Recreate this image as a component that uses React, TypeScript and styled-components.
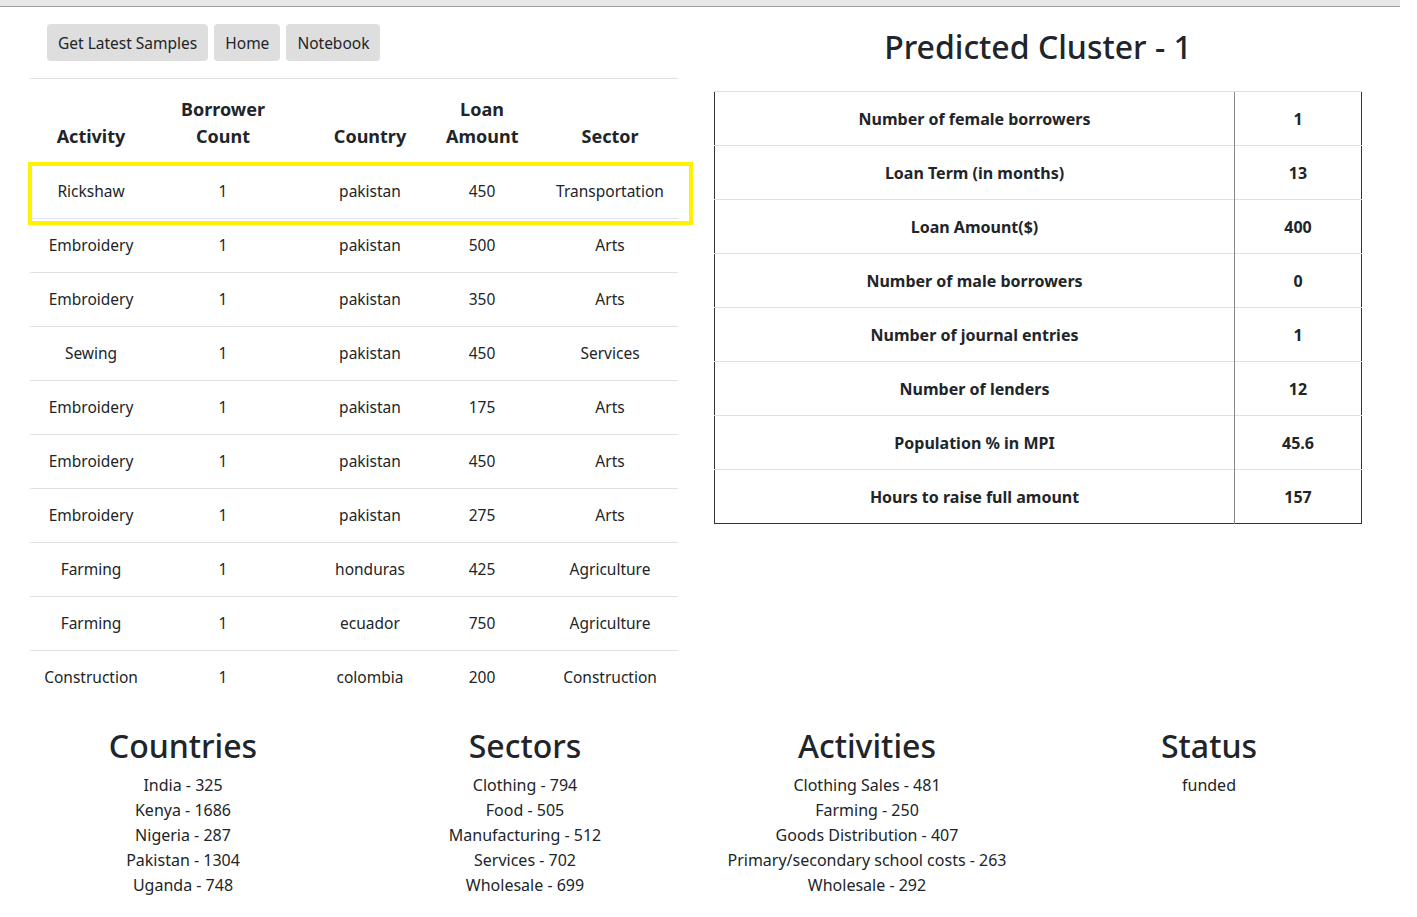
import React from "react";
import styled, { createGlobalStyle } from "styled-components";

const GlobalStyle = createGlobalStyle`
  body {
    margin: 0;
    background: #ffffff;
    color: #212529;
    font-family: "Noto Sans", "Open Sans", sans-serif;
    font-size: 16px;
  }
  * { box-sizing: border-box; }
`;

const TopBar = styled.div`
  width: 1400px;
  height: 7px;
  background: #e8e8e8;
  border-bottom: 1px solid #a0a0a0;
`;

const Container = styled.div`
  width: 1368px;
  margin-left: 12px;
`;

const TopRow = styled.div`
  display: grid;
  grid-template-columns: 684px 684px;
`;

const Col = styled.div`
  padding: 0 18px;
`;

const ButtonBar = styled.div`
  display: flex;
  gap: 6px;
  padding: 17px 0 0 17px;
  margin-bottom: 17px;
`;

const NavButton = styled.button`
  background: #dedede;
  border: none;
  border-radius: 4px;
  height: 37px;
  padding: 0 11px;
  font-family: inherit;
  font-size: 15.5px;
  color: #212529;
  cursor: pointer;
`;

const TableWrap = styled.div`
  position: relative;
`;

const SampleTable = styled.table`
  width: 648px;
  border-collapse: collapse;
  table-layout: fixed;
  text-align: center;

  th:nth-child(4),
  td:nth-child(4) {
    padding-right: 6px;
  }
  th:nth-child(5),
  td:nth-child(5) {
    padding-left: 18px;
  }
`;

const HeadCell = styled.th`
  font-size: 18px;
  font-weight: 700;
  line-height: 27px;
  padding: 17px 0 14px;
  vertical-align: bottom;
  border-top: 1px solid #dee2e6;
  border-bottom: 1px solid #dee2e6;
`;

const Cell = styled.td`
  padding: 14px 0 15px;
  font-size: 15.5px;
  line-height: 24px;
  border-top: 1px solid #dee2e6;
  white-space: nowrap;
`;

const Highlight = styled.div`
  position: absolute;
  left: -2px;
  top: 84px;
  width: 665px;
  height: 63px;
  border: 4px solid #fff200;
  pointer-events: none;
`;

const ClusterTitle = styled.h2`
  margin: 18px 0 23px;
  font-size: 32px;
  font-weight: 500;
  line-height: 43px;
  text-align: center;
`;

const FeatureTable = styled.table`
  width: 648px;
  border-collapse: collapse;
  border-left: 1px solid #333;
  border-right: 1px solid #333;
  border-bottom: 1px solid #333;
`;

const FeatureCell = styled.td<{ $value?: boolean }>`
  height: 54px;
  padding: 0 12px;
  text-align: center;
  font-weight: 700;
  border-top: 1px solid #dee2e6;
  width: ${(p) => (p.$value ? "127px" : "auto")};
  border-left: ${(p) => (p.$value ? "1px solid #888" : "none")};
`;

const StatsRow = styled.div`
  display: grid;
  grid-template-columns: repeat(4, 342px);
  margin-top: 20px;
  text-align: center;
`;

const StatTitle = styled.h2`
  margin: 0 0 6px;
  font-size: 32px;
  font-weight: 500;
  line-height: 43px;
`;

const StatItem = styled.div`
  font-size: 16px;
  line-height: 25px;
`;

const samples = [
  ["Rickshaw", "1", "pakistan", "450", "Transportation"],
  ["Embroidery", "1", "pakistan", "500", "Arts"],
  ["Embroidery", "1", "pakistan", "350", "Arts"],
  ["Sewing", "1", "pakistan", "450", "Services"],
  ["Embroidery", "1", "pakistan", "175", "Arts"],
  ["Embroidery", "1", "pakistan", "450", "Arts"],
  ["Embroidery", "1", "pakistan", "275", "Arts"],
  ["Farming", "1", "honduras", "425", "Agriculture"],
  ["Farming", "1", "ecuador", "750", "Agriculture"],
  ["Construction", "1", "colombia", "200", "Construction"],
];

const features = [
  ["Number of female borrowers", "1"],
  ["Loan Term (in months)", "13"],
  ["Loan Amount($)", "400"],
  ["Number of male borrowers", "0"],
  ["Number of journal entries", "1"],
  ["Number of lenders", "12"],
  ["Population % in MPI", "45.6"],
  ["Hours to raise full amount", "157"],
];

const stats = [
  { title: "Countries", items: ["India - 325", "Kenya - 1686", "Nigeria - 287", "Pakistan - 1304", "Uganda - 748"] },
  { title: "Sectors", items: ["Clothing - 794", "Food - 505", "Manufacturing - 512", "Services - 702", "Wholesale - 699"] },
  {
    title: "Activities",
    items: ["Clothing Sales - 481", "Farming - 250", "Goods Distribution - 407", "Primary/secondary school costs - 263", "Wholesale - 292"],
  },
  { title: "Status", items: ["funded"] },
];

const colWidths = [122, 142, 152, 78, 154];

const App = () => {
  return (
    <>
      <GlobalStyle />
      <TopBar />
      <Container>
        <TopRow>
          <Col>
            <ButtonBar>
              <NavButton>Get Latest Samples</NavButton>
              <NavButton>Home</NavButton>
              <NavButton>Notebook</NavButton>
            </ButtonBar>
            <TableWrap>
              <SampleTable>
                <colgroup>
                  {colWidths.map((w, i) => (
                    <col key={i} style={{ width: w }} />
                  ))}
                </colgroup>
                <thead>
                  <tr>
                    <HeadCell>Activity</HeadCell>
                    <HeadCell>
                      Borrower
                      <br />
                      Count
                    </HeadCell>
                    <HeadCell>Country</HeadCell>
                    <HeadCell>
                      Loan
                      <br />
                      Amount
                    </HeadCell>
                    <HeadCell>Sector</HeadCell>
                  </tr>
                </thead>
                <tbody>
                  {samples.map((row, i) => (
                    <tr key={i}>
                      {row.map((v, j) => (
                        <Cell key={j}>{v}</Cell>
                      ))}
                    </tr>
                  ))}
                </tbody>
              </SampleTable>
              <Highlight />
            </TableWrap>
          </Col>
          <Col>
            <ClusterTitle>Predicted Cluster - 1</ClusterTitle>
            <FeatureTable>
              <tbody>
                {features.map(([label, value]) => (
                  <tr key={label}>
                    <FeatureCell>{label}</FeatureCell>
                    <FeatureCell $value>{value}</FeatureCell>
                  </tr>
                ))}
              </tbody>
            </FeatureTable>
          </Col>
        </TopRow>
        <StatsRow>
          {stats.map((s) => (
            <div key={s.title}>
              <StatTitle>{s.title}</StatTitle>
              {s.items.map((it) => (
                <StatItem key={it}>{it}</StatItem>
              ))}
            </div>
          ))}
        </StatsRow>
      </Container>
    </>
  );
};

export default App;
